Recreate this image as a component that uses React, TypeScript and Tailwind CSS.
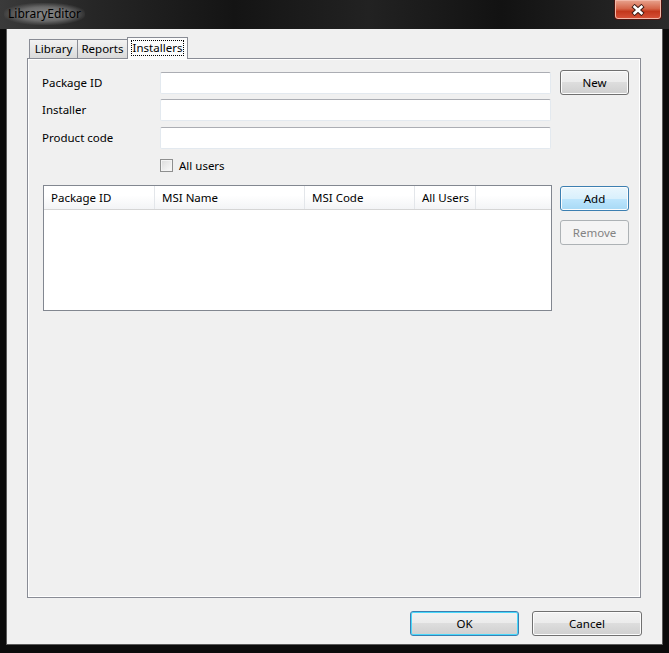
import React from "react";

const font = "font-['Segoe_UI','Noto_Sans',sans-serif]";

const btnBase =
  "h-[25px] w-[69px] rounded-[3px] border text-[11.5px] flex items-center justify-center";
const btnNormal =
  "text-black border-[#707070] bg-[linear-gradient(#f2f2f2_0%,#ebebeb_50%,#dddddd_50%,#cfcfcf_100%)] shadow-[inset_0_0_0_1px_#fcfcfc]";
const btnHot =
  "text-black border-[#3c7fb1] bg-[linear-gradient(#eaf6fd_0%,#d9f0fc_50%,#bee6fd_50%,#a7d9f5_100%)] shadow-[inset_0_0_0_1px_#fcfcfc]";
const btnDefault =
  "text-black border-[#3c7fb1] bg-[linear-gradient(#f2f2f2_0%,#ebebeb_50%,#dddddd_50%,#cfcfcf_100%)] shadow-[inset_0_0_0_1px_#48d8fb]";
const btnDisabled = "text-[#838383] border-[#adb2b5] bg-[#f4f4f4]";

const inputCls =
  "h-[22px] w-[391px] rounded-[2px] border border-[#e3e9ef] border-t-[#abadb3] bg-white";

const FormRow: React.FC<{ label: string; className?: string }> = ({ label, className = "" }) => (
  <div className={`flex items-center ${className}`}>
    <span className="w-[118px] text-[11.5px] text-black">{label}</span>
    <div className={inputCls} />
  </div>
);

const columns = [
  { name: "Package ID", w: "w-[111px]" },
  { name: "MSI Name", w: "w-[150px]" },
  { name: "MSI Code", w: "w-[110px]" },
  { name: "All Users", w: "w-[61px]" },
];

const CloseIcon = () => (
  <svg width="16" height="12" viewBox="0 0 16 12">
    <path
      d="M3 1.5 L13 10.5 M13 1.5 L3 10.5"
      stroke="#3b1a14"
      strokeWidth="4.6"
      fill="none"
    />
    <path
      d="M3.6 2 L12.4 10 M12.4 2 L3.6 10"
      stroke="#ffffff"
      strokeWidth="2.6"
      fill="none"
    />
  </svg>
);

export default function App() {
  return (
    <div
      className={`w-[669px] h-[653px] flex flex-col bg-[#0b0b0b] overflow-hidden ${font}`}
    >
      {/* title bar */}
      <div className="h-[29px] flex items-start bg-[linear-gradient(90deg,#3a3a3a_0%,#262626_14%,#141414_35%,#222222_55%,#121212_75%,#2a2a2a_100%)]">
        <span className="ml-[4px] mt-[3px] px-[4px] py-[2px] rounded-full text-[12px] text-black bg-[radial-gradient(ellipse_at_center,#8a8a8a_0%,#6a6a6a_45%,rgba(70,70,70,0)_75%)]">
          LibraryEditor
        </span>
        <div className="ml-auto mr-[7px] w-[48px] h-[20px] rounded-b-[4px] border border-t-0 border-[#4a1510] bg-[linear-gradient(#e8a48f_0%,#d5664a_45%,#c3381c_60%,#d8533a_100%)] shadow-[inset_0_0_0_1px_#f2b8a8] flex items-center justify-center">
          <CloseIcon />
        </div>
      </div>

      <div className="flex flex-1">
        <div className="w-[7px] border-r border-[#5a5a5a]" />
        {/* client area */}
        <div className="w-[655px] h-[615px] bg-[#f0f0f0] flex flex-col pt-[8px] pl-[20px] pr-[21px]">
          {/* tabs */}
          <div className="h-[21px] flex items-end pl-[2px] relative z-10">
            <div className="h-[19px] w-[49px] border border-b-0 border-[#898c95] bg-[linear-gradient(#f2f2f2,#dadada)] text-[11.5px] flex items-center justify-center">
              Library
            </div>
            <div className="-ml-px h-[19px] w-[51px] border border-b-0 border-[#898c95] bg-[linear-gradient(#f2f2f2,#dadada)] text-[11.5px] flex items-center justify-center">
              Reports
            </div>
            <div className="-ml-px h-[22px] -mb-px w-[61px] border border-b-0 border-[#898c95] bg-[#fcfcfc] text-[11.5px] flex items-start justify-center pt-[2px]">
              <span className="border border-dotted border-black px-[1px] leading-[14px]">
                Installers
              </span>
            </div>
          </div>

          {/* tab page */}
          <div className="h-[540px] w-[614px] border border-[#898c95] bg-[#f0f0f0] shadow-[inset_-1px_-1px_0_#ffffff,inset_1px_1px_0_#ffffff] flex pt-[11px] pl-[14px]">
            <div className="w-[518px] flex flex-col mt-[2px]">
              <FormRow label="Package ID" />
              <FormRow label="Installer" className="mt-[5px]" />
              <FormRow label="Product code" className="mt-[6px]" />
              <div className="mt-[10px] ml-[118px] flex items-center h-[13px]">
                <div className="w-[13px] h-[13px] border border-[#8e8f8f] bg-[linear-gradient(135deg,#dcdcdc,#fbfbfb)] shadow-[inset_0_0_0_1px_#f4f4f4]" />
                <span className="ml-[6px] text-[11.5px] text-black">All users</span>
              </div>
              {/* list view */}
              <div className="mt-[13px] ml-px w-[509px] h-[126px] border border-[#828790] bg-white">
                <div className="h-[24px] flex bg-[linear-gradient(#ffffff_0%,#ffffff_40%,#f3f4f6_100%)] border-b border-[#d5d5d5]">
                  {columns.map((c) => (
                    <div
                      key={c.name}
                      className={`${c.w} h-full border-r border-[#e3e6ea] pl-[7px] flex items-center text-[11.5px] text-black`}
                    >
                      {c.name}
                    </div>
                  ))}
                </div>
              </div>
            </div>
            <div className="w-[69px] flex flex-col">
              <div className={`${btnBase} ${btnNormal}`}>New</div>
              <div className={`${btnBase} ${btnHot} mt-[91px]`}>Add</div>
              <div className={`${btnBase} ${btnDisabled} mt-[9px]`}>Remove</div>
            </div>
          </div>

          {/* dialog buttons */}
          <div className="mt-[13px] flex justify-end gap-[13px] -mr-px">
            <div className={`${btnBase} ${btnDefault} w-[109px]`}>OK</div>
            <div className={`${btnBase} ${btnNormal} w-[110px]`}>Cancel</div>
          </div>
        </div>
        <div className="w-[7px] border-l border-[#5a5a5a]" />
      </div>
      <div className="h-[9px] border-t border-[#5a5a5a] mx-[6px]" />
    </div>
  );
}
